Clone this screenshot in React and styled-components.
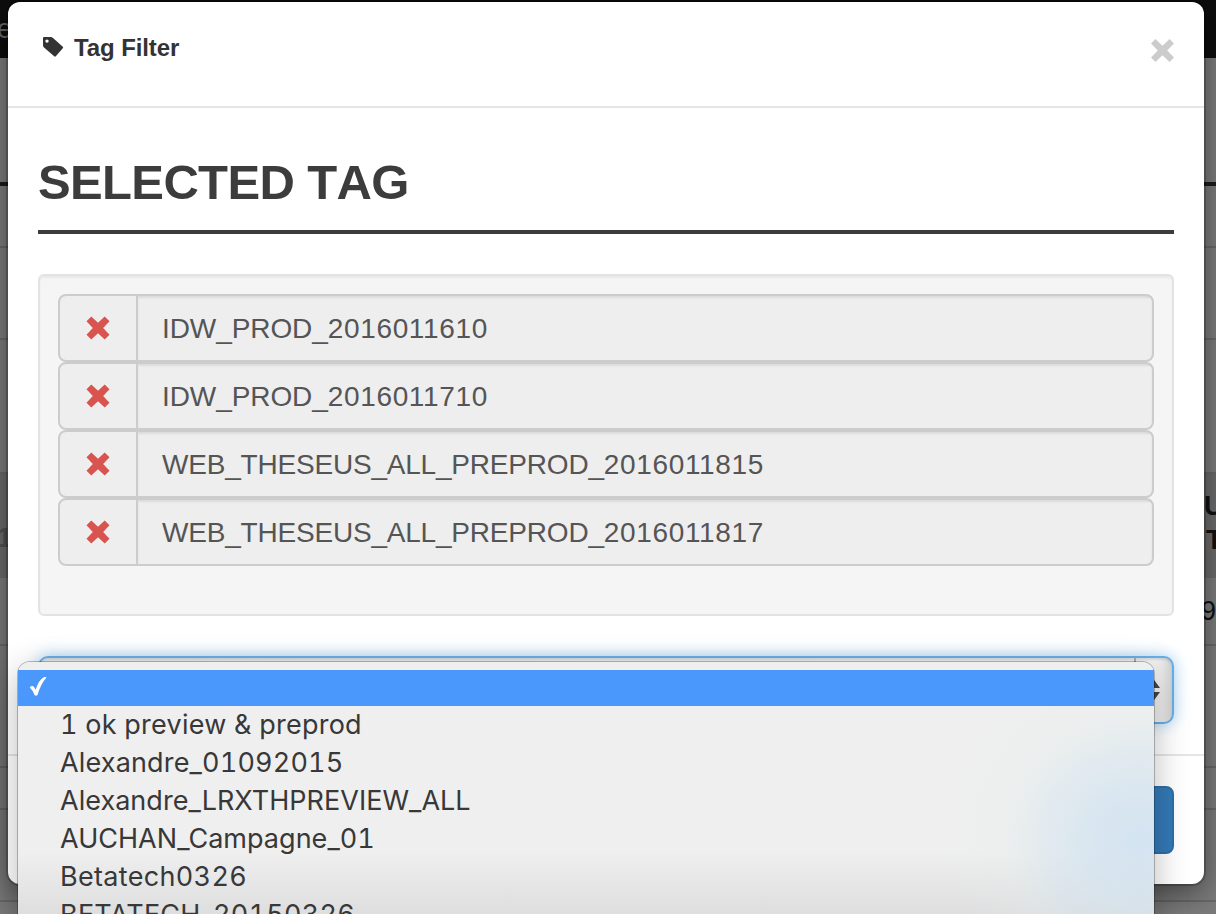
import React from "react";
import styled, { createGlobalStyle } from "styled-components";

const Global = createGlobalStyle`
  * { box-sizing: border-box; }
  html, body { margin: 0; width: 1216px; height: 914px; overflow: hidden; }
  body { background: #757575; font-family: "Liberation Sans", Arial, sans-serif; color: #333; }
`;

const Screen = styled.div`
  position: relative;
  width: 1216px;
  height: 914px;
  overflow: hidden;
`;

const Page = styled.div`
  display: flex;
  flex-direction: column;
`;

const Band = styled.div`
  height: ${(p) => p.$h}px;
  flex: none;
  display: flex;
  justify-content: space-between;
  align-items: center;
  background: ${(p) => p.$bg || "#7b7b7b"};
  border-bottom: ${(p) => p.$line || 0}px solid ${(p) => p.$lineColor || "#686868"};
  color: #111;
  font-size: 27px;
  line-height: 34px;
  white-space: pre;
`;

const BandText = styled.span`
  width: ${(p) => p.$w || 12}px;
  display: flex;
  flex-direction: column;
  align-items: ${(p) => p.$side || "flex-start"};
  color: ${(p) => p.$color || "#111"};
  font-weight: ${(p) => p.$weight || 400};
  padding-top: ${(p) => p.$drop || 0}px;
  padding-bottom: ${(p) => p.$lift || 0}px;
`;

const Inset = styled.span`
  padding-left: ${(p) => p.$by}px;
`;

const Modal = styled.section`
  position: absolute;
  left: 8px;
  top: 2px;
  width: 1196px;
  height: 882px;
  background: #fff;
  border-radius: 12px;
  box-shadow: 0 0 0 2px rgba(0, 0, 0, 0.2), 0 10px 30px rgba(0, 0, 0, 0.45);
  display: flex;
  flex-direction: column;
`;

const Header = styled.header`
  height: 106px;
  flex: none;
  padding: 30px 29px 0 34px;
  border-bottom: 2px solid #e5e5e5;
  display: flex;
  align-items: flex-start;
`;

const Title = styled.h4`
  margin: 1px 0 0 10px;
  flex: 1;
  font-size: 24px;
  line-height: 30px;
  letter-spacing: -0.1px;
`;

const TagIcon = styled.svg`
  width: 22px;
  height: 22px;
  margin-top: 4px;
`;

const CloseIcon = styled.svg`
  width: 25px;
  height: 25px;
  margin-top: 6px;
`;

const Body = styled.div`
  height: 646px;
  flex: none;
  padding: 44px 30px 30px;
`;

const Heading = styled.h1`
  margin: 0 0 40px;
  height: 82px;
  border-bottom: 4px solid #3c3c3c;
  color: #3c3c3c;
  font-size: 49px;
  line-height: 61px;
  font-kerning: none;
  letter-spacing: -0.65px;
`;

const Well = styled.div`
  height: 342px;
  margin-bottom: 40px;
  padding: 18px;
  background: #f5f5f5;
  border: 2px solid #e3e3e3;
  border-radius: 6px;
  box-shadow: inset 0 2px 2px rgba(0, 0, 0, 0.05);
`;

const TagRow = styled.div`
  height: 68px;
  display: flex;
  border: 2px solid #ccc;
  border-radius: 8px;
  background: #eee;
  overflow: hidden;
`;

const Remove = styled.span`
  width: 78px;
  border-right: 2px solid #ccc;
  display: flex;
  align-items: center;
  justify-content: center;
  svg { width: 24px; height: 24px; }
`;

const TagName = styled.span`
  flex: 1;
  padding-left: 24px;
  color: #555;
  font-size: 28px;
  line-height: 65px;
  letter-spacing: ${(p) => p.$track || 0}px;
  box-shadow: inset 0 2px 2px rgba(0, 0, 0, 0.075);
`;

const Stamp = styled.span`
  letter-spacing: 0.65px;
`;

const Select = styled.div`
  height: 68px;
  border: 2px solid #66afe9;
  border-radius: 10px;
  background: linear-gradient(90deg, #eee 0, #f4f4f4 1114px, #ececec 1122px, #d2d2d2 100%);
  box-shadow: 0 0 16px rgba(102, 175, 233, 0.6), inset 0 2px 2px rgba(0, 0, 0, 0.1);
  display: flex;
  justify-content: flex-end;
`;

const Stepper = styled.div`
  width: 38px;
  border-left: 2px solid #aaa;
  padding: 19px 0 0 8px;
  svg { display: block; width: 16px; height: 26px; }
`;

const Footer = styled.footer`
  flex: 1;
  padding: 30px;
  border-top: 2px solid #e5e5e5;
  display: flex;
  justify-content: flex-end;
`;

const Button = styled.div`
  width: 130px;
  height: 68px;
  border: 2px solid #2e6da4;
  border-radius: 8px;
  background: #337ab7;
`;

const Menu = styled.ul`
  position: absolute;
  left: 18px;
  top: 662px;
  width: 1136px;
  height: 300px;
  margin: 0;
  padding: 8px 0 0;
  list-style: none;
  border-radius: 12px 12px 0 0;
  background:
    radial-gradient(ellipse 190px 180px at 1120px 178px, rgba(206, 225, 241, 0.85), rgba(209, 227, 240, 0.62) 35%, rgba(226, 238, 236, 0.25) 70%, rgba(239, 239, 239, 0) 100%),
    linear-gradient(180deg, #efefef 0, #efefef 190px, #dededf 252px);
  box-shadow: 0 0 0 1px rgba(0, 0, 0, 0.25), 0 10px 34px rgba(0, 0, 0, 0.28);
  font-family: Inter, "Liberation Sans", sans-serif;
  font-size: 27px;
  font-variant-numeric: tabular-nums;
  color: #383838;
`;

const Current = styled.li`
  height: 36px;
  padding: 6px 0 0 11px;
  background: #4a98fc;
  svg { display: block; width: 18px; height: 22px; }
`;

const Option = styled.li`
  height: 38px;
  line-height: 38px;
  padding-left: 42px;
  white-space: pre;
  letter-spacing: ${(p) => p.$track || 0}px;
`;

const tags = [
  ["IDW_PROD_", "2016011610", -0.08],
  ["IDW_PROD_", "2016011710", -0.08],
  ["WEB_THESEUS_ALL_PREPROD_", "2016011815", -0.2],
  ["WEB_THESEUS_ALL_PREPROD_", "2016011817", -0.2],
];

const options = [
  ["1 ok preview & preprod", 0.25],
  ["Alexandre_01092015", 0.16],
  ["Alexandre_LRXTHPREVIEW_ALL", 0.03],
  ["AUCHAN_Campagne_01", 0.03],
  ["Betatech0326", 0.32],
  ["BETATECH_20150326", 0.22],
];

const Cross = ({ color }) => (
  <svg viewBox="0 0 24 24">
    <path fill={color} d="M5.300.5 12 6.800 18.700.5 23.500 5.300 17.200 12l6.300 6.700-4.800 4.800L12 17.200l-6.700 6.300L.5 18.700 6.800 12 .5 5.300z" />
  </svg>
);

export default function App() {
  return (
    <Screen>
      <Global />
      <Page>
        <Band $h={58} $bg="#0d0d0d"><BandText $side="flex-end" $color="#666">e</BandText></Band>
        <Band $h={128} $line={4} $lineColor="#1b1b1b" />
        <Band $h={62} $line={2} />
        <Band $h={92} $line={2} />
        <Band $h={134} $line={2} />
        <Band $h={104} $bg="#6b6b6b">
          <BandText $side="flex-end" $color="#505050" $weight={700} $drop={24}>1</BandText>
          <BandText $weight={700} $lift={6}><span>U</span><Inset $by={2}>T</Inset></BandText>
        </Band>
        <Band $h={68} $line={2}><span /><BandText $w={15}>9</BandText></Band>
        <Band $h={122} $line={2} />
        <Band $h={42} $line={2} />
        <Band $h={92} $line={2} />
        <Band $h={12} />
      </Page>
      <Modal>
        <Header>
          <TagIcon viewBox="0 0 22 22">
            <path fill="#333" fillRule="evenodd" d="M2 1h6.500q1.500 0 2.500 1l9.800 8.700q.8.800 0 1.600l-7 8q-.8.800-1.600 0L2 11.500Q1 10.500 1 9V2q0-1 1-1zm3 2.400a1.700 1.700 0 1 0 0 3.400 1.700 1.700 0 0 0 0-3.400z" />
          </TagIcon>
          <Title>Tag Filter</Title>
          <CloseIcon viewBox="0 0 24 24">
            <path fill="#ccc" d="M5.200 1 12 7.500 18.800 1 23 5.200 16.500 12l6.500 6.800-4.200 4.200L12 16.500 5.200 23 1 18.800 7.500 12 1 5.200z" />
          </CloseIcon>
        </Header>
        <Body>
          <Heading>SELECTED TAG</Heading>
          <Well>
            {tags.map(([name, stamp, track]) => (
              <TagRow key={name + stamp}>
                <Remove><Cross color="#d9534f" /></Remove>
                <TagName $track={track}>{name}<Stamp>{stamp}</Stamp></TagName>
              </TagRow>
            ))}
          </Well>
          <Select>
            <Stepper>
              <svg viewBox="0 0 16 26"><path fill="#444" d="M8 0l8 11H0zM0 15h16L8 26z" /></svg>
            </Stepper>
          </Select>
        </Body>
        <Footer><Button /></Footer>
      </Modal>
      <Menu>
        <Current>
          <svg viewBox="0 0 19 22"><path fill="#fff" d="M.8 11.500Q2.500 9 5 10.500L7 14Q10 4 15.500.8q1.500-.8 3 .2Q12.500 7.500 9 19.500q-1.600 1.400-3.200 0-1.200-4.500-5-8z" /></svg>
        </Current>
        {options.map(([name, track]) => (
          <Option key={name} $track={track}>{name}</Option>
        ))}
      </Menu>
    </Screen>
  );
}
